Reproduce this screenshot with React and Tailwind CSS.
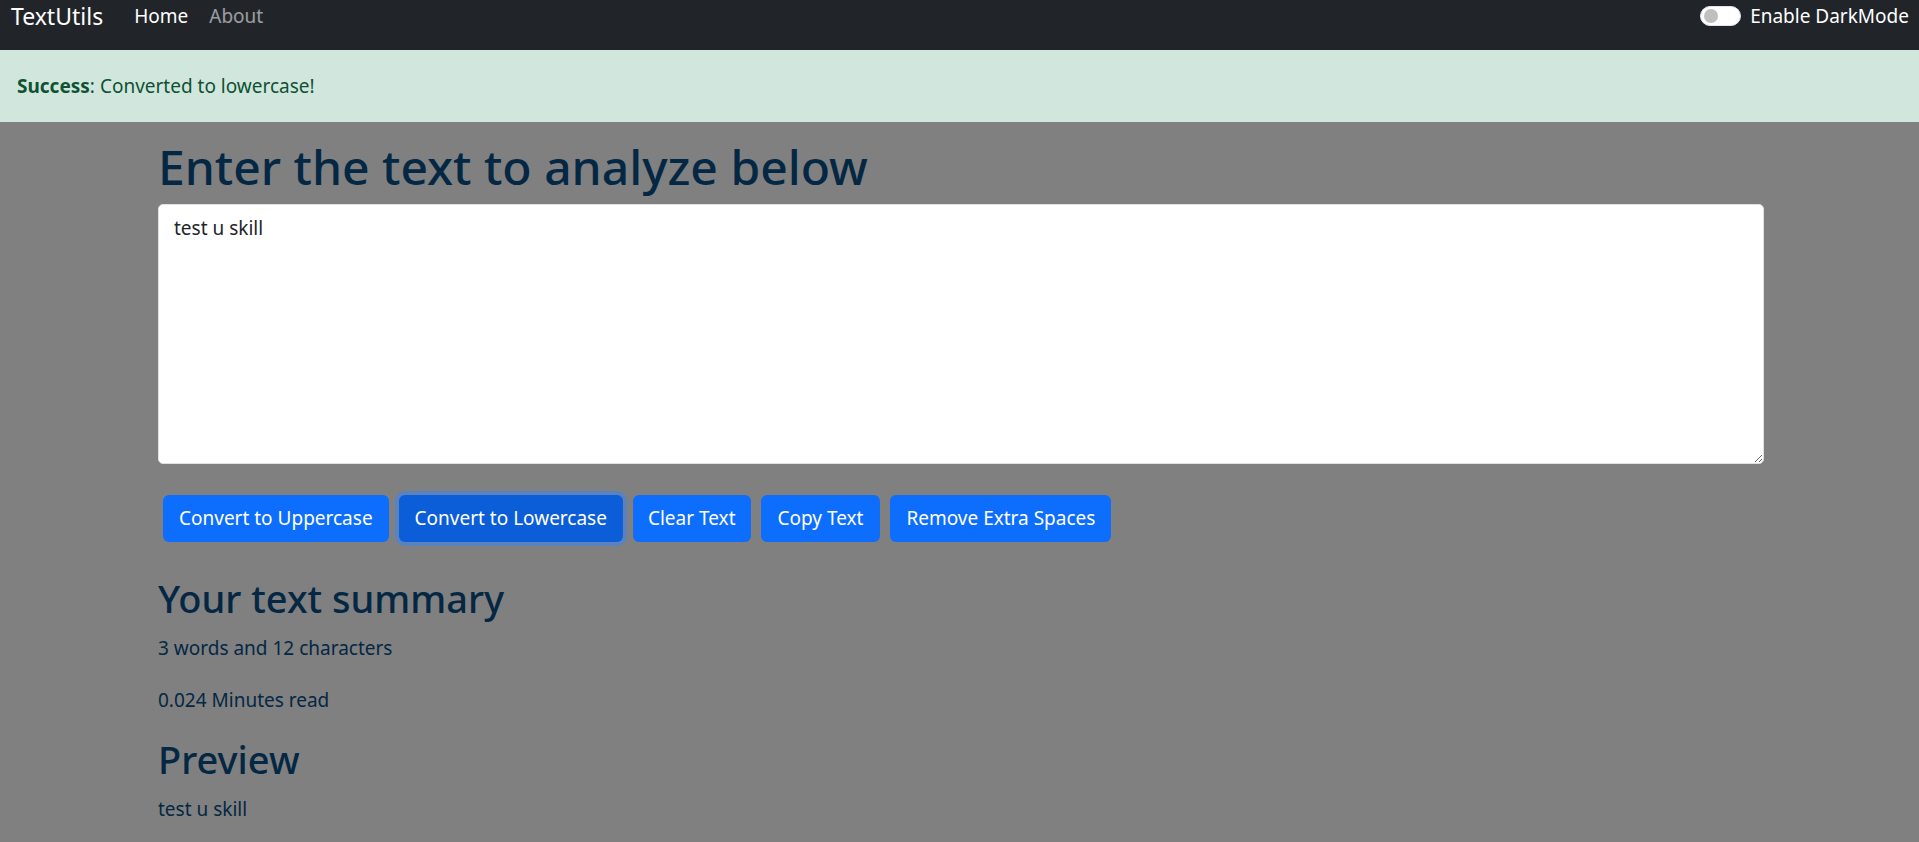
import React, { useState } from 'react';

const font = { fontFamily: '"Noto Sans", "Open Sans", sans-serif' };

function Navbar() {
    return (
        <nav className="bg-[#212529] h-[50px] flex items-start justify-between pl-[11px] pr-[10px] pt-[1px]">
            <div className="flex items-center">
                <span className="text-white text-[23px] leading-[30px] mr-[31px]">TextUtils</span>
                <span className="text-white text-[19px] leading-[30px] mr-[21px]">Home</span>
                <span className="text-white/55 text-[19px] leading-[30px]">About</span>
            </div>
            <div className="flex items-center h-[30px]">
                <span className="w-[41px] h-[20px] rounded-full bg-white border border-[#dee2e6] flex items-center px-[3px] mr-[9px]">
                    <span className="w-[14px] h-[14px] rounded-full bg-[#bfbfbf]"></span>
                </span>
                <span className="text-white text-[19px] leading-[30px]">Enable DarkMode</span>
            </div>
        </nav>
    );
}

export default function App() {
    const [text, setText] = useState('test u skill');
    const words = text.split(/\s+/).filter(w => w.length).length;

    return (
        <div style={font} className="min-h-[842px] bg-[#808080]">
            <Navbar />
            <div className="bg-[#d1e7dd] h-[72px] flex items-center px-[17px] text-[19px] text-[#0f5132]">
                <strong className="font-bold">Success</strong>: Converted to lowercase!
            </div>

            <div className="pl-[158px] pr-[155px] pt-[16px] text-[#042743]">
                <h1 className="text-[48px] leading-[58px] font-medium mb-[8px]">Enter the text to analyze below</h1>
                <textarea
                    value={text}
                    onChange={e => setText(e.target.value)}
                    rows={8}
                    className="block w-full h-[260px] bg-white text-[#212529] border border-[#dee2e6] rounded-[5px] px-[15px] py-[9px] text-[19px] leading-[29px] outline-none"
                />
                <div className="flex gap-[10px] mt-[31px] ml-[5px]">
                    <button className="h-[47px] px-[16px] rounded-[6px] bg-[#0d6efd] text-white text-[19px]">Convert to Uppercase</button>
                    <button className="h-[47px] px-[16px] rounded-[6px] bg-[#0b5ed7] text-white text-[19px] shadow-[0_0_0_4px_rgba(49,132,253,0.5)]">Convert to Lowercase</button>
                    <button className="h-[47px] px-[15px] rounded-[6px] bg-[#0d6efd] text-white text-[19px]">Clear Text</button>
                    <button className="h-[47px] px-[17px] rounded-[6px] bg-[#0d6efd] text-white text-[19px]">Copy Text</button>
                    <button className="h-[47px] px-[16px] rounded-[6px] bg-[#0d6efd] text-white text-[19px]">Remove Extra Spaces</button>
                </div>

                <h2 className="text-[38px] leading-[47px] font-medium mt-[33px] mb-[12px]">Your text summary</h2>
                <p className="text-[19px] leading-[29px] mb-[23px]">{words} words and {text.length} characters</p>
                <p className="text-[19px] leading-[29px] mb-[21px]">{(0.008 * words).toFixed(3)} Minutes read</p>
                <h2 className="text-[38px] leading-[47px] font-medium mb-[12px]">Preview</h2>
                <p className="text-[19px] leading-[29px]">{text}</p>
            </div>
        </div>
    );
}
